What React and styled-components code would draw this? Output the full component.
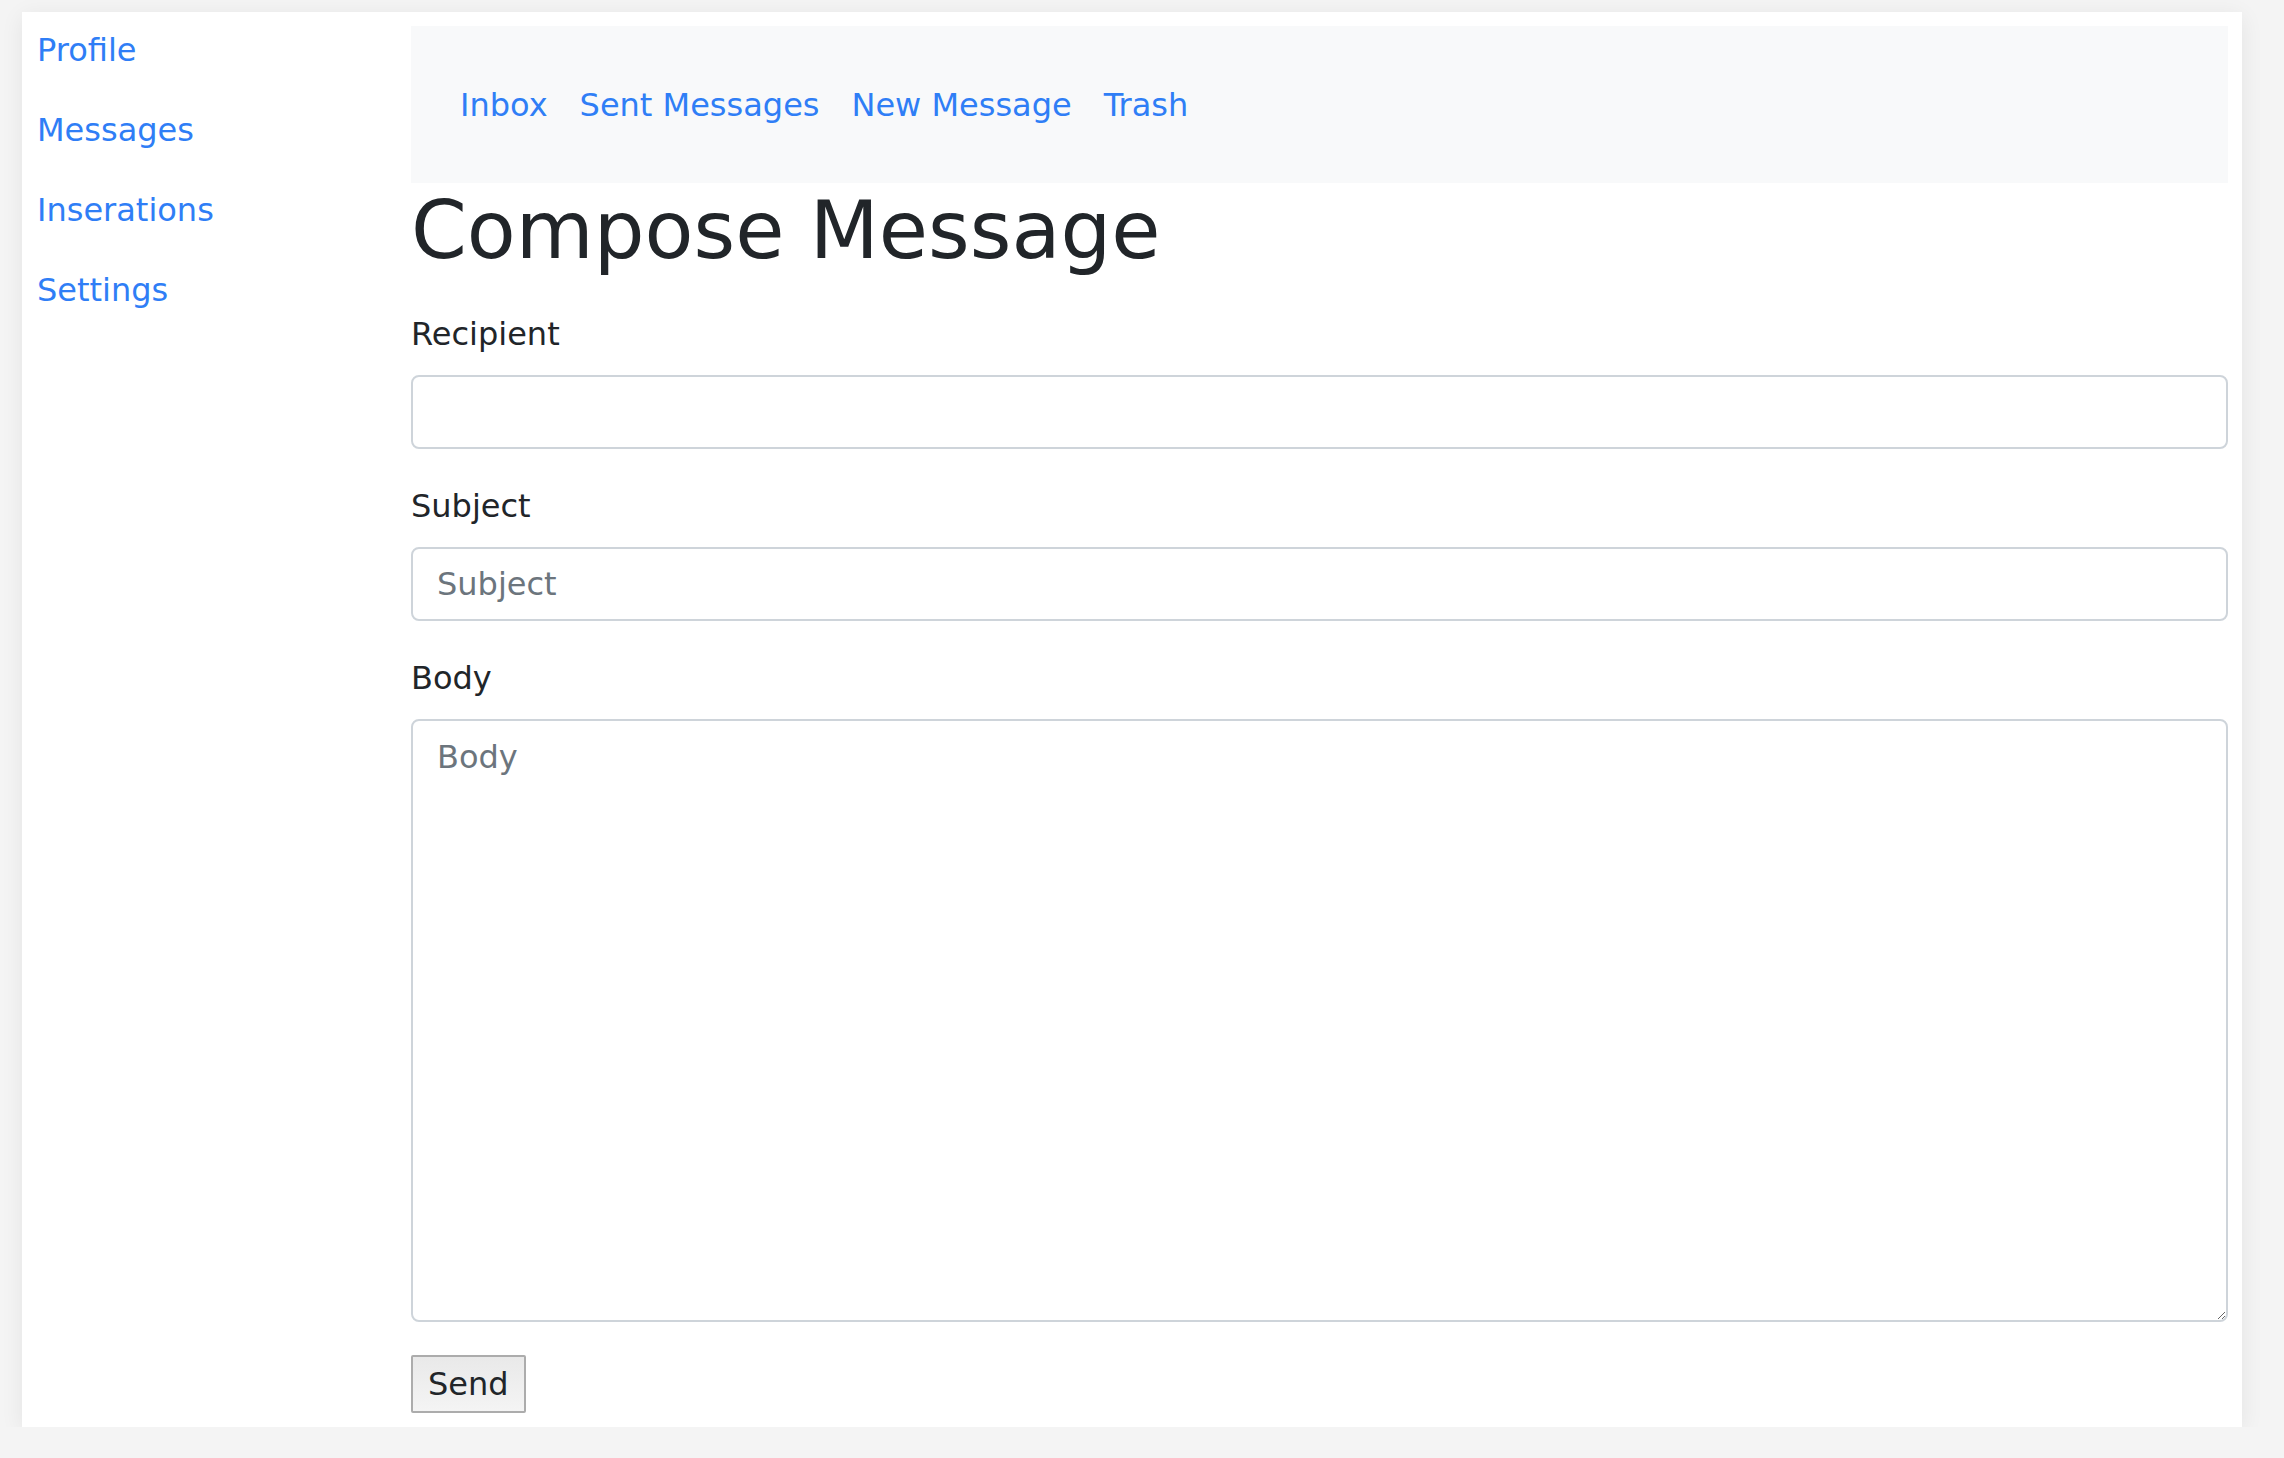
import React from 'react'
import styled, { createGlobalStyle } from 'styled-components'

const GlobalStyle = createGlobalStyle`
  html, body {
    margin: 0;
    padding: 0;
    background: #f4f4f4;
    font-family: "DejaVu Sans", "Liberation Sans", sans-serif;
    color: #212529;
  }
  * {
    box-sizing: border-box;
  }
`

const linkBlue = '#2f7ef6'

const Page = styled.div`
  padding: 12px 0 0 22px;
`

const Card = styled.div`
  width: 2220px;
  background: #fff;
  box-shadow: 0 4px 22px rgba(0, 0, 0, 0.07);
  display: grid;
  grid-template-columns: 389px 1fr;
  padding: 0 14px 14px 0;
`

const Sidebar = styled.nav`
  display: flex;
  flex-direction: column;
  align-items: flex-start;
`

const SideLink = styled.a`
  font-size: 32px;
  line-height: 48px;
  padding: 14px 15px 18px;
  color: ${linkBlue};
  text-decoration: none;
  cursor: pointer;
`

const Main = styled.main`
  display: flex;
  flex-direction: column;
  padding-top: 14px;
`

const TopNav = styled.div`
  background: #f8f9fa;
  height: 157px;
  display: flex;
  align-items: center;
  padding-left: 33px;
`

const TopLink = styled.a`
  font-size: 32px;
  line-height: 48px;
  padding: 0 16px;
  color: ${linkBlue};
  text-decoration: none;
  cursor: pointer;
`

const Heading = styled.h1`
  margin: 0 0 31px;
  font-size: 80px;
  line-height: 96px;
  font-weight: 400;
  color: #212529;
`

const Field = styled.div`
  display: flex;
  flex-direction: column;
  margin-bottom: 33px;
`

const Label = styled.label`
  font-size: 32px;
  line-height: 48px;
  margin-bottom: 17px;
  color: #212529;
`

const Input = styled.input`
  width: 100%;
  height: ${p => (p.as === 'textarea' ? '603px' : '74px')};
  padding: 12px 24px;
  border: 2px solid #ced4da;
  border-radius: 8px;
  font-family: inherit;
  font-size: 32px;
  line-height: 48px;
  color: #495057;
  background: #fff;
  outline: none;
  resize: vertical;

  &::placeholder {
    color: #6c757d;
    opacity: 1;
  }
`

const SendButton = styled.button`
  align-self: flex-start;
  height: 58px;
  padding: 0 15px;
  border: 2px solid #acacac;
  border-radius: 2px;
  background: linear-gradient(#e9e9e9, #f4f4f4);
  font-family: inherit;
  font-size: 32px;
  line-height: 54px;
  color: #212529;
  cursor: pointer;
`

const sideLinks = ['Profile', 'Messages', 'Inserations', 'Settings']
const topLinks = ['Inbox', 'Sent Messages', 'New Message', 'Trash']

export default function App() {
  return (
    <Page>
      <GlobalStyle />
      <Card>
        <Sidebar>
          {sideLinks.map(l => (
            <SideLink key={l}>{l}</SideLink>
          ))}
        </Sidebar>
        <Main>
          <TopNav>
            {topLinks.map(l => (
              <TopLink key={l}>{l}</TopLink>
            ))}
          </TopNav>
          <Heading>Compose Message</Heading>
          <Field>
            <Label htmlFor="recipient">Recipient</Label>
            <Input id="recipient" type="text" />
          </Field>
          <Field>
            <Label htmlFor="subject">Subject</Label>
            <Input id="subject" type="text" placeholder="Subject" />
          </Field>
          <Field>
            <Label htmlFor="body">Body</Label>
            <Input id="body" as="textarea" placeholder="Body" />
          </Field>
          <SendButton type="button">Send</SendButton>
        </Main>
      </Card>
    </Page>
  )
}
